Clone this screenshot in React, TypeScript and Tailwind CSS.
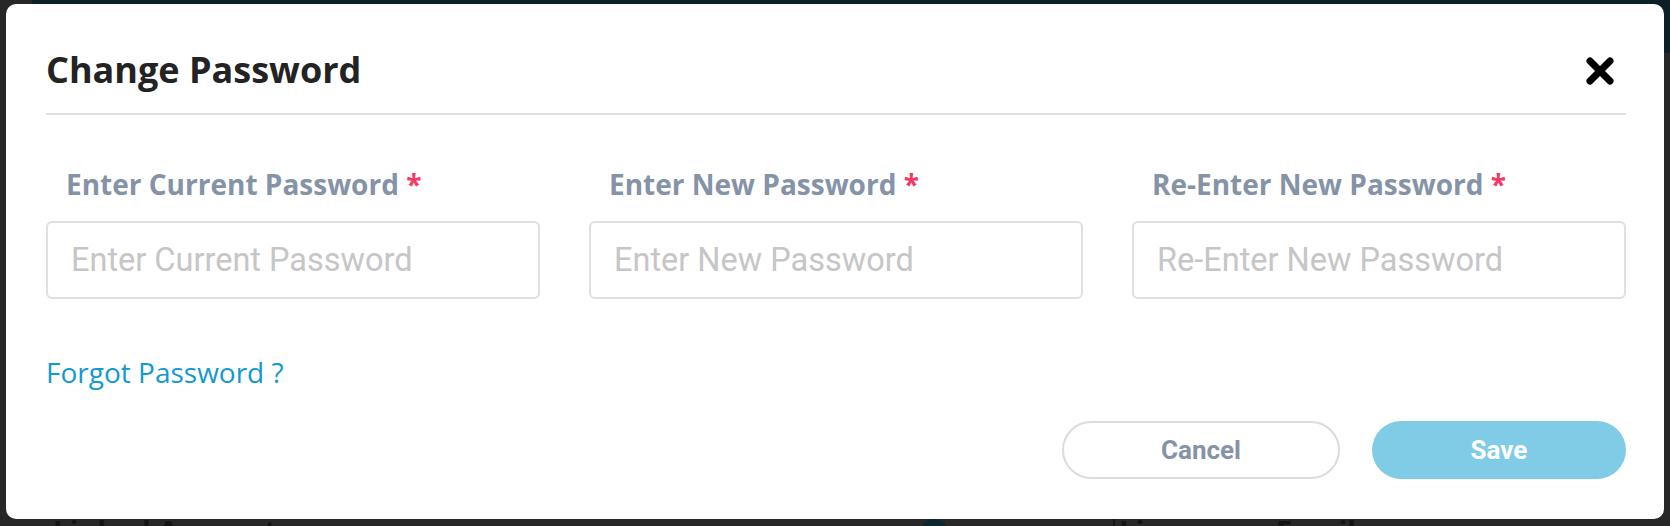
import React from "react";

const OPEN = "[font-family:'Open_Sans',sans-serif]";

function Field({ label, placeholder }: { label: string; placeholder: string }) {
  return (
    <div className="flex flex-col">
      <label className="pl-[20px] text-[28px] leading-[28px] font-bold text-[#8593a8] [font-family:'Open_Sans',sans-serif] whitespace-nowrap">
        {label} <span className="text-[#f23b63]">*</span>
      </label>
      <input
        type="password"
        placeholder={placeholder}
        className="mt-[23px] h-[78px] w-full rounded-[6px] border-2 border-[#e0e0e0] bg-white px-[23px] text-[32.5px] text-[#333] outline-none placeholder:text-[#c6c6c6] [font-family:Roboto,sans-serif]"
      />
    </div>
  );
}

export default function App() {
  return (
    <div className="relative h-[526px] w-[1670px] overflow-hidden bg-[#272727]">
      {/* background page seen behind the dialog */}
      <div className="flex h-[53px]">
        <div className="w-[32px] bg-[#272727]" />
        <div className="flex-1 bg-[#0c1e26]" />
      </div>
      <div className="flex items-start pt-[463px] text-[29px] leading-[29px] font-bold text-[#131313] [font-family:'Open_Sans',sans-serif]">
        <div className="ml-[53px] w-[867px] whitespace-nowrap">Linked Accounts</div>
        <div className="mt-[3px] h-[28px] w-[28px] rounded-full bg-[#0b2631]" />
        <div className="ml-[165px] mt-[2px] h-[30px] w-[2px] bg-[#161616]" />
        <div className="ml-[4px] whitespace-nowrap">Linux.com Email</div>
      </div>

      {/* dialog */}
      <div className="absolute left-[6px] top-[4px] h-[515px] w-[1658px] rounded-[10px] bg-white pl-[40px] pr-[38px] pt-[48px]">
        <div className="flex h-[36px] items-center">
          <h2 className={`text-[36px] leading-[36px] font-bold text-[#232323] ${OPEN}`}>Change Password</h2>
          <button className="ml-auto mr-[11px] mt-[2px] flex h-[30px] w-[30px] items-center justify-center" aria-label="Close">
            <svg width="30" height="30" viewBox="0 0 30 30">
              <path d="M5 5 L25 25 M25 5 L5 25" stroke="#000" strokeWidth="7" strokeLinecap="round" fill="none" />
            </svg>
          </button>
        </div>
        <div className="mt-[25px] h-[2px] bg-[#dde2e7]" />

        <div className="mt-[55px] grid grid-cols-3 gap-x-[49px]">
          <Field label="Enter Current Password" placeholder="Enter Current Password" />
          <Field label="Enter New Password" placeholder="Enter New Password" />
          <Field label="Re-Enter New Password" placeholder="Re-Enter New Password" />
        </div>

        <div className={`mt-[59px] text-[28px] leading-[28px] text-[#1399d1] ${OPEN}`}>
          <a href="#" className="whitespace-nowrap">Forgot Password ?</a>
        </div>

        <div className="mt-[35px] flex justify-end gap-[32px]">
          <button className="h-[58px] w-[278px] rounded-full border-2 border-[#dcdcdc] bg-white text-[26px] font-bold text-[#8593a8] [font-family:Roboto,sans-serif]">
            Cancel
          </button>
          <button className="h-[58px] w-[254px] rounded-full bg-[#80cce6] text-[26px] font-bold text-white [font-family:Roboto,sans-serif]">
            Save
          </button>
        </div>
      </div>
    </div>
  );
}
